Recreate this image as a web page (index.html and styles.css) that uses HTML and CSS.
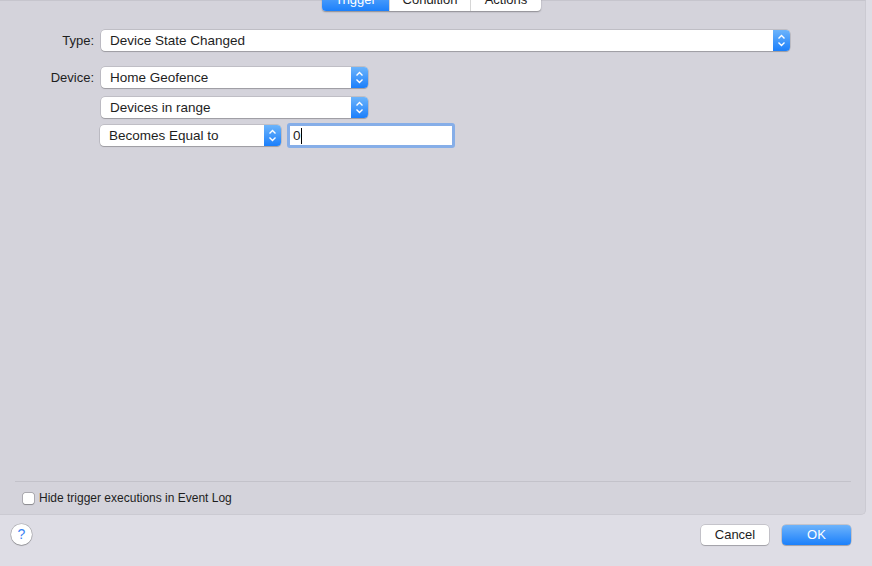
FILE: index.html
```html
<!DOCTYPE html>
<html lang="en">
<head>
  <meta charset="UTF-8">
  <title>Edit Trigger</title>
  <link rel="stylesheet" href="styles.css">
</head>
<body>
  <div class="sheet">
    <div class="panel">
      <div class="tabs">
        <div class="tab tab-trigger active">Trigger</div>
        <div class="tab tab-condition">Condition</div>
        <div class="tab tab-actions">Actions</div>
      </div>

      <div class="form">
        <div class="row row-type">
          <label class="label">Type:</label>
          <div class="popup popup-wide">
            <span>Device State Changed</span>
            <span class="arrows">
              <svg width="17" height="21" viewBox="0 0 17 21"><path d="M5.5 8.5 L8.5 5.5 L11.5 8.5 M5.5 12.5 L8.5 15.5 L11.5 12.5" fill="none" stroke="#fff" stroke-width="1.4"/></svg>
            </span>
          </div>
        </div>

        <div class="row row-device">
          <label class="label">Device:</label>
          <div class="popup popup-mid">
            <span>Home Geofence</span>
            <span class="arrows">
              <svg width="17" height="21" viewBox="0 0 17 21"><path d="M5.5 8.5 L8.5 5.5 L11.5 8.5 M5.5 12.5 L8.5 15.5 L11.5 12.5" fill="none" stroke="#fff" stroke-width="1.4"/></svg>
            </span>
          </div>
        </div>

        <div class="row row-state">
          <span class="label"></span>
          <div class="popup popup-mid">
            <span>Devices in range</span>
            <span class="arrows">
              <svg width="17" height="21" viewBox="0 0 17 21"><path d="M5.5 8.5 L8.5 5.5 L11.5 8.5 M5.5 12.5 L8.5 15.5 L11.5 12.5" fill="none" stroke="#fff" stroke-width="1.4"/></svg>
            </span>
          </div>
        </div>

        <div class="row row-compare">
          <span class="label"></span>
          <div class="popup popup-small">
            <span>Becomes Equal to</span>
            <span class="arrows">
              <svg width="17" height="21" viewBox="0 0 17 21"><path d="M5.5 8.5 L8.5 5.5 L11.5 8.5 M5.5 12.5 L8.5 15.5 L11.5 12.5" fill="none" stroke="#fff" stroke-width="1.4"/></svg>
            </span>
          </div>
          <div class="field"><span>0</span><span class="caret"></span></div>
        </div>
      </div>

      <div class="separator"></div>
      <div class="check-row">
        <span class="checkbox"></span>
        <span>Hide trigger executions in Event Log</span>
      </div>
    </div>

    <div class="footer">
      <div class="help">?</div>
      <div class="buttons">
        <div class="button">Cancel</div>
        <div class="button default">OK</div>
      </div>
    </div>
  </div>
</body>
</html>
```

FILE: styles.css
```css
* {
  margin: 0;
  padding: 0;
  box-sizing: border-box;
}

body {
  width: 872px;
  height: 566px;
  overflow: hidden;
  background: #dedde5;
  font-family: "Liberation Sans", Arial, sans-serif;
  font-size: 13px;
  color: #1e1e1e;
}

.sheet {
  display: flex;
  flex-direction: column;
  height: 566px;
}

.panel {
  height: 515px;
  margin-left: -6px;
  margin-right: 6px;
  background: #d4d3db;
  border: 1px solid #cbcad2;
  border-top-color: #c6c5cd;
  border-radius: 0 0 5px 5px;
  display: flex;
  flex-direction: column;
}

/* segmented control sitting on the top edge of the panel */
.tabs {
  display: flex;
  align-self: flex-start;
  margin-top: -13px;
  margin-left: 327px;
  height: 23px;
  background: #fff;
  border-radius: 4px;
  box-shadow: 0 0.5px 1.5px rgba(0, 0, 0, 0.35);
}

.tab {
  padding-top: 2px;
  line-height: 19px;
  font-size: 13px;
  text-align: center;
  border-left: 1px solid #d6d6d6;
}

.tab-trigger {
  width: 67px;
  border-left: none;
}

.tab-condition {
  width: 81px;
}

.tab-actions {
  width: 71px;
}

.tab.active {
  background: linear-gradient(#6db3fb, #1c80fb);
  color: #fff;
  border-radius: 4px 0 0 4px;
}

.form {
  flex: 1;
  padding-top: 19px;
  padding-left: 6px;
}

.row {
  display: grid;
  grid-template-columns: 93px auto auto;
  column-gap: 7px;
  align-items: center;
  justify-content: start;
}

.row-device {
  margin-top: 16px;
}

.row-state {
  margin-top: 9px;
}

.row-compare {
  margin-top: 5px;
  column-gap: 6px;
}

.label {
  text-align: right;
  font-size: 13px;
}

.popup {
  display: flex;
  align-items: center;
  justify-content: space-between;
  height: 21px;
  background: #fff;
  border-radius: 4px;
  box-shadow: 0 0 0 0.5px rgba(0, 0, 0, 0.2), 0 1px 1px rgba(0, 0, 0, 0.18);
  padding-left: 9px;
  font-size: 13.5px;
}

.popup-wide {
  width: 689px;
}

.popup-mid {
  width: 267px;
}

.popup-small {
  width: 181px;
}

.arrows {
  display: flex;
  width: 17px;
  height: 21px;
  background: linear-gradient(#6cb4fb, #1b7ffb);
  border-radius: 0 4px 4px 0;
}

.field {
  display: flex;
  align-items: center;
  width: 168px;
  height: 25px;
  background: #fff;
  border: 3px solid #86aee8;
  border-radius: 3px;
  padding-left: 3px;
  font-size: 13.5px;
}

.caret {
  width: 1px;
  height: 16px;
  background: #000;
}

.separator {
  height: 1px;
  margin: 0 14px 0 20px;
  background: #c3c2ca;
}

.check-row {
  display: flex;
  align-items: center;
  gap: 5px;
  height: 32px;
  padding-left: 28px;
  font-size: 12px;
}

.checkbox {
  width: 11px;
  height: 11px;
  background: #fff;
  border-radius: 2px;
  box-shadow: 0 0 0 0.5px rgba(0, 0, 0, 0.35), 0 0.5px 1px rgba(0, 0, 0, 0.2);
}

.footer {
  flex: 1;
  display: flex;
  justify-content: space-between;
  align-items: flex-start;
  padding: 9px 21px 0 11px;
}

.help {
  width: 21px;
  height: 21px;
  border-radius: 50%;
  background: #fff;
  box-shadow: 0 0 0 0.5px rgba(0, 0, 0, 0.25), 0 1px 1px rgba(0, 0, 0, 0.2);
  color: #3b82f3;
  font-size: 14px;
  text-align: center;
  line-height: 21px;
}

.buttons {
  display: flex;
  gap: 13px;
  padding-top: 1px;
}

.button {
  width: 68px;
  height: 20px;
  line-height: 20px;
  text-align: center;
  background: #fff;
  border-radius: 4px;
  box-shadow: 0 0 0 0.5px rgba(0, 0, 0, 0.22), 0 1px 1px rgba(0, 0, 0, 0.18);
  font-size: 13px;
}

.button.default {
  width: 69px;
  background: linear-gradient(#6db3fb, #1b80fb);
  color: #fff;
}
```
